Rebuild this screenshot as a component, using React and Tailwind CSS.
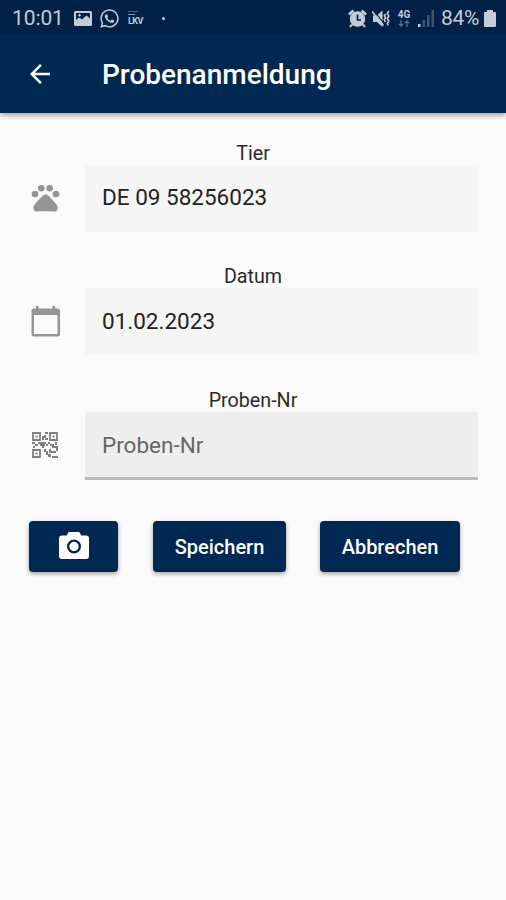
import React from 'react';
import { MdArrowBack } from 'react-icons/md';
import { FaWhatsapp } from 'react-icons/fa';

const PawIcon = () => (
    <svg className="h-[30px] w-[30px]" viewBox="0 0 30 30" fill="currentColor">
        <circle cx="4" cy="11" r="3.300" />
        <circle cx="10.300" cy="5.300" r="3.300" />
        <circle cx="18.700" cy="5.300" r="3.300" />
        <circle cx="25" cy="11" r="3.300" />
        <path d="M11 13.200c2.200-2.300 4.900-2.300 7.100 0 1.700 1.900 3.600 4.100 5.400 6 2.400 2.400 4.100 4.600 3 7.200-.8 1.700-2.400 2.300-4.300 2.100-5.100-.5-10.200-.5-15.300 0-1.900.2-3.500-.4-4.200-2.100-1.100-2.600.4-4.800 2.800-7.200 1.900-1.900 3.800-4.100 5.500-6z" />
    </svg>
);

const CalendarIcon = () => (
    <svg className="h-[32px] w-[30px]" viewBox="0 0 30 32" fill="currentColor">
        <path fillRule="evenodd" d="M5 1h2.500v2.500h14V1H24v2.500h3a2 2 0 0 1 2 2v24a2 2 0 0 1-2 2H2.500a2 2 0 0 1-2-2v-24a2 2 0 0 1 2-2H5zM3 10v19h23.500V10z" />
    </svg>
);

const QrIcon = () => (
    <svg className="ml-px h-[26px] w-[26px] text-[#7f7f7f]" viewBox="0 0 26 26" fill="none" stroke="currentColor" strokeWidth="1.8">
        <path d="M1 1h7v7H1zM18 1h7v7h-7zM1 18h7v7H1z" />
        <path
            fill="currentColor"
            stroke="none"
            d="M3.500 3.500h2v2h-2zM20.500 3.500h2v2h-2zM3.500 20.500h2v2h-2zM13 0h3v2h-3zM10 4h2v4h-2zM12 3h2v3h-2zM13 6h3v2h-3zM0 10h3v2H0zM3 12h3v2H3zM6 10h8v2H6zM8 12h5v2H8zM1 14h2v2H1zM10 14h2v2h-2zM14 12h2v2h-2zM16 10h2v2h-2zM18 12h4v2h-4zM23 10h2v3h-2zM20 14h6v2h-6zM12 17h2v3h-2zM14 19h2v4h-2zM17 17h2v4h-2zM24 16h2v3h-2zM19 19h5v2h-5zM16 22h3v3h-3zM20 24h6v2h-6z"
        />
    </svg>
);

const ImageIcon = () => (
    <svg className="h-[15px] w-[18px]" viewBox="0 0 18 15" fill="currentColor">
        <path fillRule="evenodd" d="M1.500 0h15A1.500 1.500 0 0 1 18 1.500v12a1.500 1.500 0 0 1-1.500 1.500h-15A1.500 1.500 0 0 1 0 13.500v-12A1.500 1.500 0 0 1 1.500 0zM2 2v7l3-2.500 3 2 4.500-4L16 7.500V2z" />
        <circle cx="5.500" cy="4.300" r="1.200" />
    </svg>
);

const AlarmIcon = () => (
    <svg className="h-[19px] w-[19px]" viewBox="0 0 19 19" fill="currentColor">
        <path d="M0 4.500L4.500.5l1.800 2L1.800 6.500zM19 4.500L14.500.5l-1.800 2 4.500 4zM3 15l-1.800 2.500 1.300 1 3-2.500zM16 15l1.800 2.500-1.300 1-3-2.500z" />
        <circle cx="9.500" cy="10" r="7.700" />
        <path d="M9.500 5.500V11H13" fill="none" stroke="#012147" strokeWidth="1.700" />
    </svg>
);

const MuteIcon = () => (
    <svg className="h-[17px] w-[18px]" viewBox="0 0 18 17" fill="currentColor">
        <path d="M1 5.500h4l5.500-5V17L5 12H1z" />
        <path d="M2 1l10 12.500" stroke="#012147" strokeWidth="1.200" />
        <path d="M0 1.500l11.500 14" fill="none" stroke="currentColor" strokeWidth="1.700" />
        <path d="M13.500 4l-1.200 1.800 1.200 2-1.200 2 1.200 2.200M16.800 1l-1.500 2.500 1.500 2.500-1.500 2.500 1.500 2.500-1.500 2.500 1 2" fill="none" stroke="currentColor" strokeWidth="1.600" />
    </svg>
);

const NetworkArrows = () => (
    <svg className="h-[7px] w-[12px] opacity-50" viewBox="0 0 12 7" fill="none" stroke="currentColor" strokeWidth="1.200">
        <path d="M3 0v6M.8 3.800L3 6l2.200-2.200M9 7V1M6.800 3.200L9 1l2.200 2.200" />
    </svg>
);

const SignalIcon = () => (
    <svg className="h-[17px] w-4" viewBox="0 0 16 17" fill="currentColor">
        <path d="M0 14h2.500v3H0z" />
        <path d="M4.500 10H7v7H4.500zM9 5h2.500v12H9zM13.500 0H16v17h-2.500z" opacity=".3" />
    </svg>
);

const BatteryIcon = () => (
    <svg className="ml-[4px] h-[17px] w-[12px]" viewBox="0 0 12 17" fill="currentColor">
        <path d="M3 0h6v2h2a1 1 0 0 1 1 1v13a1 1 0 0 1-1 1H1a1 1 0 0 1-1-1V3a1 1 0 0 1 1-1h2z" />
    </svg>
);

const CameraIcon = () => (
    <svg className="mb-[3px] h-[27px] w-[30px]" viewBox="0 0 30 27" fill="currentColor">
        <path fillRule="evenodd" d="M11 0h8a2 2 0 0 1 2 1l1.200 2.500H27a3 3 0 0 1 3 3V24a3 3 0 0 1-3 3H3a3 3 0 0 1-3-3V6.500a3 3 0 0 1 3-3h4.800L9 1a2 2 0 0 1 2-1zM15 7.500a7 7 0 1 0 0 14 7 7 0 0 0 0-14zm0 2.300a4.700 4.700 0 1 1 0 9.400 4.700 4.700 0 0 1 0-9.400z" />
    </svg>
);

const StatusBar = () => (
    <div className="flex h-[34px] items-center justify-between bg-[#012147] pl-3 pr-[10px] pt-[3px] text-[#c3ccd7]">
        <div className="flex items-center">
            <span className="w-[52px] text-[21px] tracking-[-0.1px]">10:01</span>
            <span className="ml-[10px]"><ImageIcon /></span>
            <FaWhatsapp className="ml-[7px] h-[21px] w-[21px]" />
            <div className="ml-[8px] flex w-[17px] flex-col gap-[2px]">
                <span className="h-px w-[10px] bg-current opacity-40" />
                <span className="h-px w-[7px] bg-current opacity-70" />
                <span className="text-[9px] font-bold leading-[9px] tracking-[-0.6px]">LKV</span>
            </div>
            <span className="ml-[17px] h-[3px] w-[3px] rounded-full bg-current" />
        </div>
        <div className="flex items-center">
            <AlarmIcon />
            <span className="ml-[5px]"><MuteIcon /></span>
            <div className="ml-[7px] flex w-[14px] flex-col items-center">
                <span className="text-[10px] font-bold leading-[10px]">4G</span>
                <NetworkArrows />
            </div>
            <span className="ml-[7px]"><SignalIcon /></span>
            <span className="ml-[7px] w-[39px] text-[21px] tracking-[-0.3px]">84%</span>
            <BatteryIcon />
        </div>
    </div>
);

const Field = ({ label, icon, children, boxClass }) => (
    <div className="h-[123.500px]">
        <div className="h-[23px] text-center text-[19.700px] leading-[23px] text-[#2b2b2b]">{label}</div>
        <div className="flex items-center pr-7">
            <div className="flex w-[85px] shrink-0 items-center pb-px pl-[31px] text-[#959595]">{icon}</div>
            <div className={`flex flex-1 items-center pl-[17px] text-[22.500px] ${boxClass}`}>{children}</div>
        </div>
    </div>
);

const buttonClass = 'flex h-[51px] items-center justify-center rounded-[4px] bg-[#012852] text-[20px] font-medium text-white shadow-[0_2px_4px_rgba(0,0,0,0.35)]';

export default function App() {
    return (
        <div className="h-[900px] w-[506px] overflow-hidden bg-[#fafafa] font-['Roboto',sans-serif]">
            <StatusBar />
            <header className="flex h-[79px] items-center bg-[#012852] pl-[25px] text-white shadow-[0_2px_6px_rgba(0,0,0,0.4)]">
                <MdArrowBack className="h-[30px] w-[30px]" />
                <h1 className="ml-[47px] pt-0.5 text-[28px] font-medium">Probenanmeldung</h1>
            </header>

            <main className="pt-[28.500px]">
                <Field label="Tier" icon={<PawIcon />} boxClass="h-[67px] bg-[#f5f5f5] text-[#222]">
                    DE 09 58256023
                </Field>
                <Field label="Datum" icon={<CalendarIcon />} boxClass="h-[67px] bg-[#f5f5f5] text-[#222]">
                    01.02.2023
                </Field>
                <Field label="Proben-Nr" icon={<QrIcon />} boxClass="h-[68px] border-b-[3px] border-[#bdbdbd] bg-[#eeeeee] pt-[3px] text-[#666]">
                    Proben-Nr
                </Field>

                <div className="mt-[9px] flex pl-[29px]">
                    <button className={`${buttonClass} w-[89px]`}><CameraIcon /></button>
                    <button className={`${buttonClass} ml-[35px] w-[133px]`}>Speichern</button>
                    <button className={`${buttonClass} ml-[34px] w-[140px]`}>Abbrechen</button>
                </div>
            </main>
        </div>
    );
}
